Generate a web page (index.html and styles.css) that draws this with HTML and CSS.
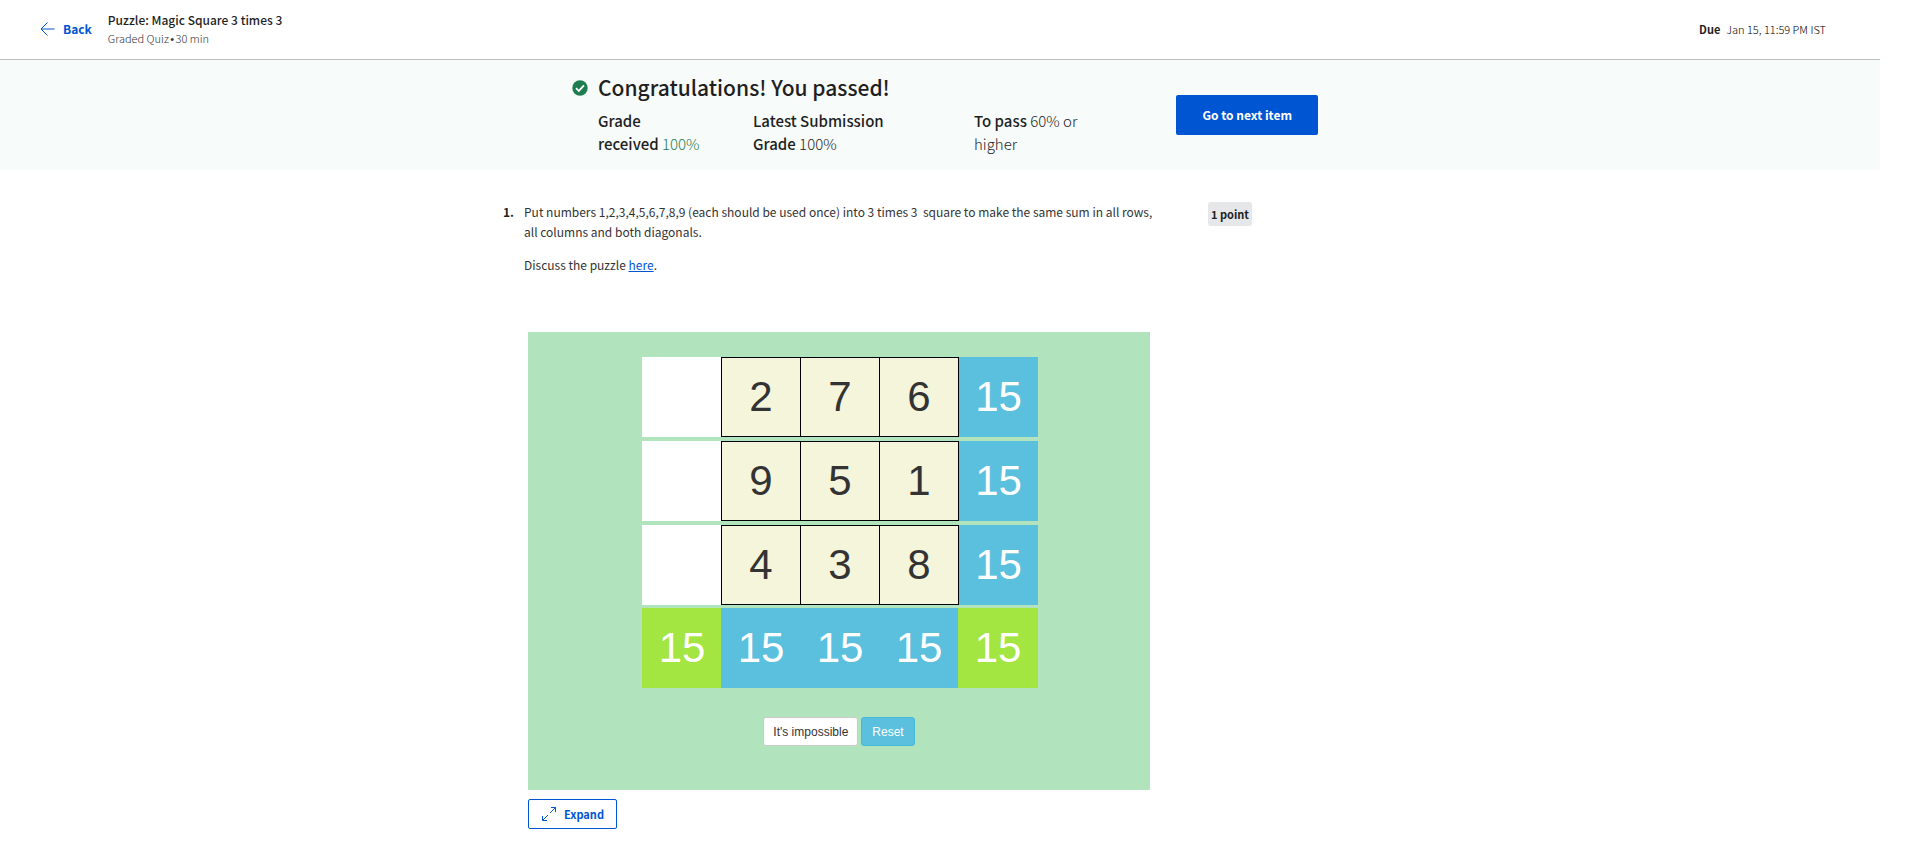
FILE: index.html
```html
<!DOCTYPE html>
<html lang="en">
<head>
<meta charset="utf-8">
<title>Puzzle: Magic Square 3 times 3</title>
<link rel="stylesheet" href="styles.css">
</head>
<body>
<div class="page">
  <header class="topbar">
    <a class="back" href="#">
      <svg class="back-icon" width="15" height="14" viewBox="0 0 15 14" fill="none" stroke="currentColor" aria-hidden="true"><path d="M14.500 7H1M7.500.5L1 7l6.500 6.500"/></svg>
      <span>Back</span>
    </a>
    <div class="title-block">
      <h1 class="title">Puzzle: Magic Square 3 times 3</h1>
      <p class="subtitle">Graded Quiz <span class="bullet">•</span> 30 min</p>
    </div>
    <p class="due"><strong>Due</strong><span class="date">Jan 15, 11:59 PM IST</span></p>
  </header>

  <section class="banner">
    <div class="banner-inner">
      <svg class="pass-icon" width="16" height="16" viewBox="0 0 16 16" aria-hidden="true"><circle cx="8" cy="8" r="7.700" fill="#1d7c50"/><path d="M4 8.200l2.800 2.700L12 5.400" fill="none" stroke="#fff" stroke-width="1.800"/></svg>
      <div class="result">
        <h2 class="result-title">Congratulations! You passed!</h2>
        <div class="grades">
          <p class="grade-received"><strong>Grade<br>received</strong> <span class="pass">100%</span></p>
          <p class="grade-latest"><strong>Latest Submission<br>Grade</strong> 100%</p>
          <p class="grade-needed"><strong>To pass</strong> 60% or<br>higher</p>
        </div>
      </div>
      <button class="next" type="button">Go to next item</button>
    </div>
  </section>

  <main class="question">
    <span class="number">1.</span>
    <div class="content">
      <div class="prompt">
        <p>Put numbers 1,2,3,4,5,6,7,8,9 (each should be used once) into 3 times 3&nbsp; square to make the same sum in all rows, all columns and both diagonals.</p>
        <p>Discuss the puzzle <a href="#">here</a>.</p>
      </div>
      <div class="puzzle">
        <div class="board">
          <div class="row"><div class="cell blank"></div><div class="cell tile">2</div><div class="cell tile">7</div><div class="cell tile">6</div><div class="cell sum">15</div></div>
          <div class="row"><div class="cell blank"></div><div class="cell tile">9</div><div class="cell tile">5</div><div class="cell tile">1</div><div class="cell sum">15</div></div>
          <div class="row"><div class="cell blank"></div><div class="cell tile">4</div><div class="cell tile">3</div><div class="cell tile">8</div><div class="cell sum">15</div></div>
          <div class="row"><div class="cell diagonal">15</div><div class="cell sum">15</div><div class="cell sum">15</div><div class="cell sum">15</div><div class="cell diagonal">15</div></div>
        </div>
        <div class="actions">
          <button class="btn" type="button">It's impossible</button>
          <button class="btn btn-info" type="button">Reset</button>
        </div>
      </div>
      <button class="expand" type="button">
        <svg width="16" height="16" viewBox="0 0 16 16" fill="none" stroke="currentColor" aria-hidden="true"><path d="M9 7l5.500-5.500M10 1.500h4.500V6M7 9l-5.500 5.500M1.500 10v4.500H6"/></svg>
        <span>Expand</span>
      </button>
    </div>
    <span class="points">1 point</span>
  </main>
</div>
</body>
</html>
```
FILE: styles.css
```css
* { box-sizing: border-box; }

body {
  margin: 0;
  background: #fff;
  color: #1f1f1f;
  font-family: "Noto Sans CJK SC", "Open Sans", sans-serif;
  font-size: 12px;
  line-height: 20px;
}

h1, h2, p { margin: 0; }

button { font-family: inherit; cursor: pointer; }

.page { margin-right: 40px; }

/* Top bar */
.topbar {
  display: flex;
  align-items: center;
  height: 60px;
  padding: 0 54px 2px 40px;
  border-bottom: 1px solid #bdbdbd;
}

.back {
  display: flex;
  align-items: center;
  gap: 8px;
  margin-right: 16px;
  color: #0056d2;
  font-weight: 700;
  text-decoration: none;
}

.title-block { padding-top: 2px; }

.title { font-size: 12px; font-weight: 500; line-height: 18px; }

.subtitle { color: #333; font-size: 11px; font-weight: 300; line-height: 18px; }

.bullet { margin: 0 -1px; font-family: "Liberation Sans", sans-serif; }

.due {
  display: flex;
  gap: 6px;
  margin-left: auto;
  font-size: 11px;
}

.date { color: #000; font-weight: 300; }

/* Result banner */
.banner { background: #f7fbfa; }

.banner-inner {
  display: flex;
  align-items: flex-start;
  max-width: 756px;
  margin: 0 auto;
  padding: 13px 0 15px 10px;
}

.pass-icon { flex: none; margin: 7px 10px 0 0; }

.result { flex: 1; }

.result-title { font-size: 21px; font-weight: 500; line-height: 28px; }

.grades {
  display: flex;
  margin-top: 8px;
  font-size: 15px;
  font-weight: 300;
  line-height: 23px;
}

.grades strong { font-weight: 500; }

.grade-received { width: 155px; }

.grade-latest { width: 221px; }

.pass { color: #1d7c50; }

.next {
  height: 40px;
  margin-top: 22px;
  padding: 0 26px 2px;
  border: 0;
  border-radius: 2px;
  background: #0056d2;
  color: #fff;
  font-size: 12px;
  font-weight: 700;
}

/* Question */
.question {
  display: flex;
  align-items: flex-start;
  max-width: 874px;
  margin: 0 auto;
  padding-top: 32px;
}

.number { width: 21px; font-weight: 700; }

.content { width: 634px; }

.prompt { display: grid; gap: 13px; margin-bottom: 57px; color: #333; }

.prompt a { color: #0056d2; }

.points {
  margin-left: 50px;
  padding: 2px 3px;
  border-radius: 3px;
  background: #e5e7e8;
  font-size: 11px;
  font-weight: 700;
}

/* Magic square */
.puzzle {
  margin: 0 8px 0 4px;
  padding: 25px 0 44px;
  background: #b1e4bd;
  font-family: "Liberation Sans", Arial, sans-serif;
}

.board {
  display: grid;
  justify-content: center;
  gap: 4px;
  padding-left: 2px;
}

.row { display: flex; }

.row:last-child { margin-top: -1px; }

.cell {
  width: 80px;
  height: 80px;
  color: #fff;
  font-size: 42px;
  line-height: 80px;
  text-align: center;
}

.cell + .cell { margin-left: -1px; }

.blank { background: #fff; }

.tile {
  border: 1px solid #000;
  background: #f5f5dc;
  color: #333;
  line-height: 78px;
}

.sum { background: #5bc0de; }

.tile + .sum { margin-left: 0; width: 79px; }

.diagonal { background: #a3e541; }

.actions {
  display: flex;
  justify-content: center;
  gap: 3px;
  margin-top: 29px;
}

.btn {
  height: 29px;
  padding: 0 9px;
  border: 1px solid #ccc;
  border-radius: 3px;
  background: #fff;
  color: #333;
  font-size: 12px;
}

.btn-info {
  padding: 0 10px;
  border-color: #46b8da;
  background: #5bc0de;
  color: #fff;
}

.expand {
  display: flex;
  align-items: center;
  gap: 7px;
  height: 30px;
  margin: 9px 0 0 4px;
  padding: 0 12px;
  border: 1px solid #0056d2;
  border-radius: 2px;
  background: #fff;
  color: #0056d2;
  font-size: 11px;
  font-weight: 700;
}
```
